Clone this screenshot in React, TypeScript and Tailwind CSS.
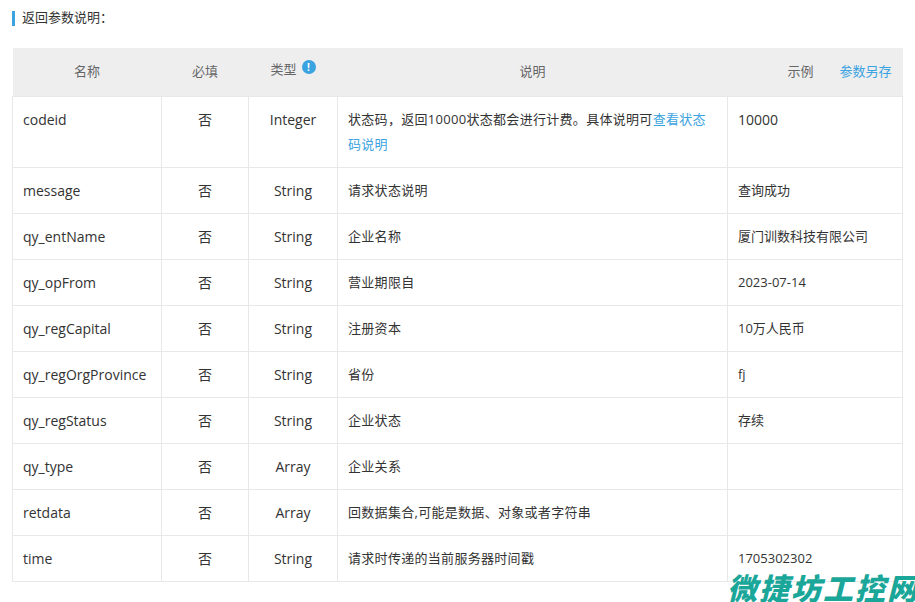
const rows: [string, string, string, React.ReactNode, string][] = [
  ['message', '否', 'String', '请求状态说明', '查询成功'],
  ['qy_entName', '否', 'String', '企业名称', '厦门训数科技有限公司'],
  ['qy_opFrom', '否', 'String', '营业期限自', '2023-07-14'],
  ['qy_regCapital', '否', 'String', '注册资本', '10万人民币'],
  ['qy_regOrgProvince', '否', 'String', '省份', 'fj'],
  ['qy_regStatus', '否', 'String', '企业状态', '存续'],
  ['qy_type', '否', 'Array', '企业关系', ''],
  ['retdata', '否', 'Array', '回数据集合,可能是数据、对象或者字符串', ''],
  ['time', '否', 'String', '请求时传递的当前服务器时间戳', '1705302302'],
];

const td = 'border border-[#e8e8e8] px-[10px] py-[10px] leading-[25px] align-top';

export default function App() {
  return (
    <div
      className="relative w-[915px] h-[602px] overflow-hidden bg-white text-[14px] text-[#333]"
      style={{ fontFamily: '"Open Sans", "Noto Sans CJK SC", sans-serif' }}
    >
      <div className="flex items-center h-[16px] mt-[10px] ml-[12px] gap-[7px]">
        <span className="w-[3px] h-[15px] bg-[#3ba3e0]" />
        <span className="text-[13px] text-[#333]">返回参数说明：</span>
      </div>
      <table className="ml-[12px] mt-[22px] border-collapse table-fixed w-[890px]">
        <colgroup>
          <col className="w-[149px]" />
          <col className="w-[87px]" />
          <col className="w-[89px]" />
          <col className="w-[390px]" />
          <col className="w-[175px]" />
        </colgroup>
        <thead>
          <tr className="h-[48px] bg-[#eeeeef] text-[#666] text-[13px]">
            <th className="font-normal">名称</th>
            <th className="font-normal">必填</th>
            <th className="font-normal">
              <span className="inline-flex items-center gap-[5px] -translate-y-[2px]">
                类型
                <span className="w-[14px] h-[14px] rounded-full bg-[#3ba3e0] text-white text-[10px] font-bold leading-[14px] text-center -translate-y-[3px]">!</span>
              </span>
            </th>
            <th className="font-normal">说明</th>
            <th className="font-normal">
              <div className="flex justify-end gap-[26px] pr-[11px]">
                <span>示例</span>
                <span className="text-[#3ba3e0]">参数另存</span>
              </div>
            </th>
          </tr>
        </thead>
        <tbody>
          <tr>
            <td className={td}>codeid</td>
            <td className={td + ' text-center'}>否</td>
            <td className={td + ' text-center'}>Integer</td>
            <td className={td + ' text-[13px] tracking-[0.3px]'}>
              状态码，返回10000状态都会进行计费。具体说明可<span className="text-[#3ba3e0]">查看状态码说明</span>
            </td>
            <td className={td}>10000</td>
          </tr>
          {rows.map(([n, r, t, d, e]) => (
            <tr key={n}>
              <td className={td}>{n}</td>
              <td className={td + ' text-center'}>{r}</td>
              <td className={td + ' text-center'}>{t}</td>
              <td className={td + ' text-[13px] tracking-[0.3px]'}>{d}</td>
              <td className={td + ' text-[13px]'}>{e}</td>
            </tr>
          ))}
        </tbody>
      </table>
      <div
        className="absolute right-[-4px] bottom-[-8px] text-[30px] font-black italic text-[#1aa79a] tracking-[2px]"
        style={{ fontFamily: '"Noto Sans CJK SC", sans-serif' }}
      >
        微捷坊工控网
      </div>
    </div>
  );
}
